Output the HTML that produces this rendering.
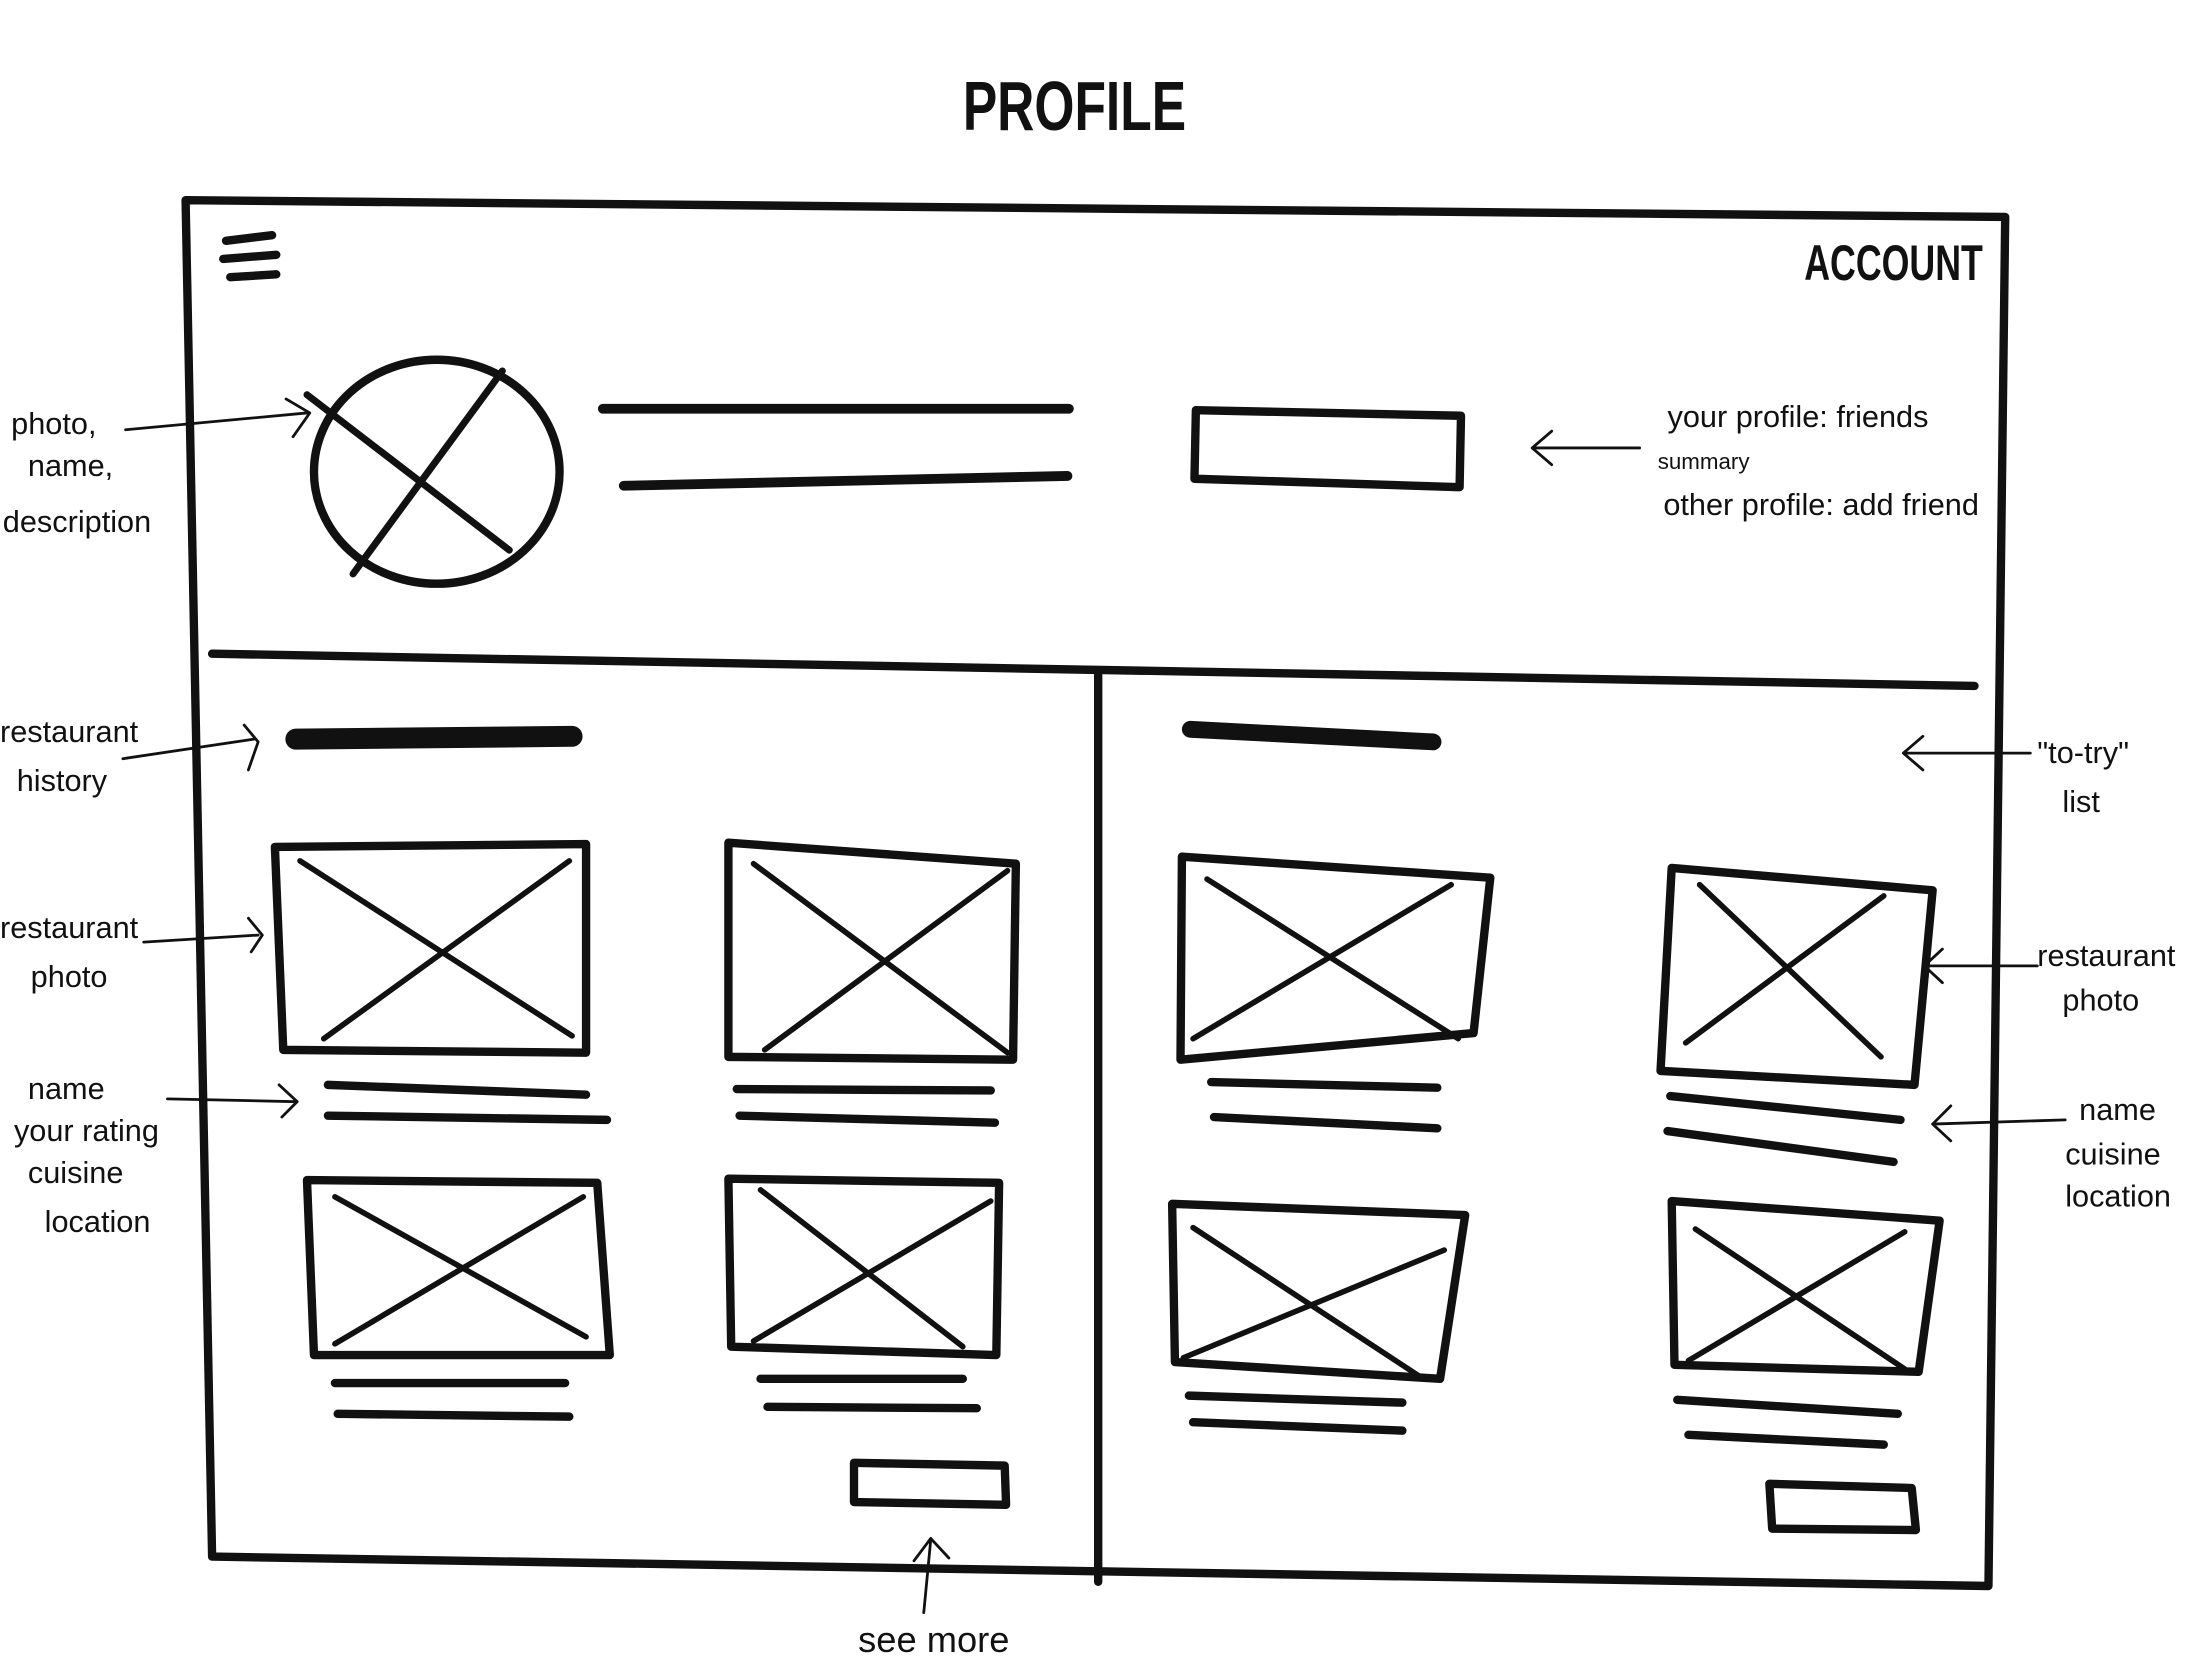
<!DOCTYPE html>
<html><head><meta charset="utf-8"><style>
html,body{margin:0;padding:0;background:#fff;}
svg{display:block;}
text{font-family:"Liberation Sans",sans-serif;fill:#111;}
.h{font-family:"Liberation Sans Narrow","Liberation Sans",sans-serif;font-weight:400;font-size:22px;}
</style></head><body>
<svg width="2188" height="1663" viewBox="0 0 1568 1188" preserveAspectRatio="none" xmlns="http://www.w3.org/2000/svg">
<rect width="1568" height="1188" fill="#fff"/>
<g fill="none" stroke="#111" stroke-linecap="round" stroke-linejoin="round">
<!-- frame -->
<path d="M133 143 L1437 155 L1425 1133 L152 1112 Z" stroke-width="6"/>
<!-- hamburger -->
<path d="M162 172 L195 168 M160 185 L198 182 M165 198 L198 196" stroke-width="6"/>
<!-- avatar -->
<ellipse cx="313" cy="337" rx="88" ry="80" stroke-width="6"/>
<path d="M220 282 L365 393 M360 265 L253 410" stroke-width="5"/>
<!-- name lines -->
<path d="M432 292 L766 292 M447 347 L765 340" stroke-width="7"/>
<!-- button -->
<path d="M857 293 L1047 297 L1046 348 L856 342 Z" stroke-width="6"/>
<!-- dividers -->
<path d="M152 467 L1415 490" stroke-width="6"/>
<path d="M787 482 L787 1130" stroke-width="6"/>
<!-- headings -->
<path d="M212 528 L410 526" stroke-width="15"/>
<path d="M853 521 L1027 530" stroke-width="12"/>
<!-- image boxes -->
<g stroke-width="6">
<path d="M197 605 L420 603 L420 752 L203 750 Z"/><path d="M215 615 L410 740 M408 615 L232 742" stroke-width="4"/>
<path d="M522 602 L728 617 L726 757 L522 755 Z"/><path d="M540 617 L722 752 M722 622 L548 750" stroke-width="4"/>
<path d="M220 843 L428 845 L437 968 L225 968 Z"/><path d="M240 855 L420 955 M418 855 L240 960" stroke-width="4"/>
<path d="M522 842 L716 845 L714 968 L524 962 Z"/><path d="M545 850 L690 962 M710 858 L540 958" stroke-width="4"/>
<path d="M847 612 L1068 627 L1056 738 L846 757 Z"/><path d="M865 628 L1045 742 M1040 632 L855 742" stroke-width="4"/>
<path d="M1198 620 L1385 636 L1372 775 L1190 765 Z"/><path d="M1218 632 L1348 755 M1350 640 L1208 745" stroke-width="4"/>
<path d="M840 860 L1050 868 L1032 985 L842 973 Z"/><path d="M855 877 L1020 985 M1035 893 L848 970" stroke-width="4"/>
<path d="M1198 858 L1390 872 L1375 980 L1200 975 Z"/><path d="M1215 878 L1365 978 M1365 880 L1210 972" stroke-width="4"/>
</g>
<!-- text lines -->
<g stroke-width="6">
<path d="M235 775 L420 782 M235 797 L435 800"/>
<path d="M528 778 L710 779 M530 797 L713 802"/>
<path d="M240 988 L405 988 M242 1010 L408 1012"/>
<path d="M545 985 L690 985 M550 1005 L700 1006"/>
<path d="M868 773 L1030 777 M870 798 L1030 806"/>
<path d="M1197 783 L1362 800 M1195 808 L1357 830"/>
<path d="M852 997 L1005 1002 M855 1016 L1005 1022"/>
<path d="M1202 1000 L1360 1010 M1210 1025 L1350 1032"/>
</g>
<!-- see more buttons -->
<path d="M612 1045 L720 1047 L721 1075 L612 1073 Z" stroke-width="6"/>
<path d="M1268 1060 L1370 1063 L1373 1093 L1270 1092 Z" stroke-width="6"/>
<!-- arrows -->
<g stroke-width="2">
<path d="M90 307 L220 295 M205 285 L222 295 L210 312"/>
<path d="M1175 320 L1100 320 M1112 308 L1098 320 L1112 332"/>
<path d="M88 542 L182 528 M175 518 L185 530 L178 550"/>
<path d="M103 673 L185 668 M178 656 L188 668 L180 680"/>
<path d="M120 785 L212 787 M200 775 L213 787 L202 798"/>
<path d="M1455 538 L1365 538 M1378 526 L1364 538 L1378 550"/>
<path d="M1460 690 L1380 690 M1392 678 L1379 690 L1392 702"/>
<path d="M1480 800 L1385 803 M1398 790 L1385 803 L1398 815"/>
<path d="M662 1152 L667 1100 M655 1115 L667 1099 L680 1113"/>
</g>
</g>
<text x="690" y="93" font-size="50" font-weight="700" textLength="160" lengthAdjust="spacingAndGlyphs">PROFILE</text>
<text x="1293" y="200" font-size="36" font-weight="700" textLength="128" lengthAdjust="spacingAndGlyphs">ACCOUNT</text>
<g class="h">
<text x="8" y="310">photo,</text><text x="20" y="340">name,</text><text x="2" y="380">description</text>
<text x="1195" y="305">your profile: friends</text><text x="1188" y="335" font-size="16">summary</text><text x="1192" y="368">other profile: add friend</text>
<text x="0" y="530">restaurant</text><text x="12" y="565">history</text>
<text x="0" y="670">restaurant</text><text x="22" y="705">photo</text>
<text x="20" y="785">name</text><text x="10" y="815">your rating</text><text x="20" y="845">cuisine</text><text x="32" y="880">location</text>
<text x="1460" y="545">"to-try"</text><text x="1478" y="580">list</text>
<text x="1460" y="690">restaurant</text><text x="1478" y="722">photo</text>
<text x="1490" y="800">name</text><text x="1480" y="832">cuisine</text><text x="1480" y="862">location</text>
<text x="615" y="1180" font-size="26">see more</text>
</g>
</svg>
</body></html>
